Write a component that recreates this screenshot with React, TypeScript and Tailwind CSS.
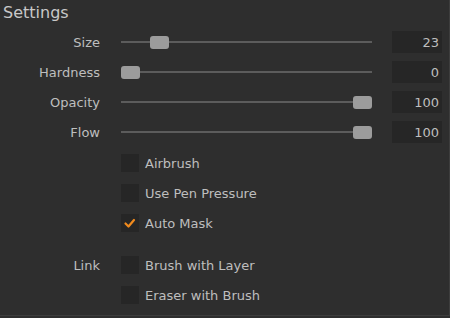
import React from "react";

const sliders = [
  { label: "Size", value: "23", left: 29 },
  { label: "Hardness", value: "0", left: 0 },
  { label: "Opacity", value: "100", left: 232 },
  { label: "Flow", value: "100", left: 232 },
];

function Check() {
  return (
    <svg width="18" height="18" viewBox="0 0 18 18">
      <path d="M4.5 9.5 L7.5 12.5 L13 6" fill="none" stroke="#f08a1d" strokeWidth="2.2" strokeLinecap="round" strokeLinejoin="round" />
    </svg>
  );
}

function CheckRow({ label, text, checked }: { label?: string; text: string; checked?: boolean }) {
  return (
    <div className="flex items-center h-[18px]">
      <div className="w-[100px] text-right pt-[2px]">{label}</div>
      <div className="ml-[21px] w-[18px] h-[18px] bg-[#262626]">{checked && <Check />}</div>
      <div className="ml-[6px] pt-[2px]">{text}</div>
    </div>
  );
}

export default function App() {
  return (
    <div
      className="w-[450px] h-[318px] bg-[#2e2e2e] text-[#bebebe] text-[13px] overflow-hidden"
      style={{ fontFamily: '"DejaVu Sans", sans-serif' }}
    >
      <div className="h-[316px] border-b border-r border-[#3d3d3d]">
        <div className="h-[31px] pl-[3px] pt-[1px] text-[16px] text-[#c8c8c8]">Settings</div>
        <div className="flex flex-col gap-[8px]">
          {sliders.map((s) => (
            <div key={s.label} className="flex items-center h-[22px]">
              <div className="w-[100px] text-right pt-[2px]">{s.label}</div>
              <div className="relative ml-[21px] w-[251px] h-[13px] flex items-center">
                <div className="w-full h-[2px] bg-[#5c5c5c]" />
                <div
                  className="absolute top-0 w-[19px] h-[13px] rounded-[3px] bg-[#9c9c9c]"
                  style={{ left: s.left }}
                />
              </div>
              <div className="ml-[20px] w-[50px] h-[22px] bg-[#262626] text-right pr-[3px] leading-[23px]">
                {s.value}
              </div>
            </div>
          ))}
        </div>
        <div className="mt-[11px] flex flex-col gap-[12px]">
          <CheckRow text="Airbrush" />
          <CheckRow text="Use Pen Pressure" />
          <CheckRow text="Auto Mask" checked />
        </div>
        <div className="mt-[24px] flex flex-col gap-[12px]">
          <CheckRow label="Link" text="Brush with Layer" />
          <CheckRow text="Eraser with Brush" />
        </div>
      </div>
    </div>
  );
}
